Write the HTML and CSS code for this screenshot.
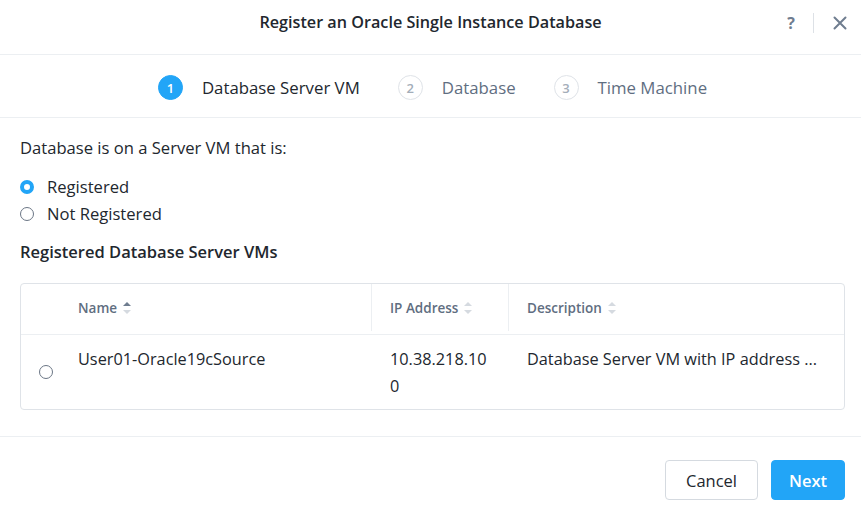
FILE: index.html
```html
<!DOCTYPE html>
<html>
<head>
<meta charset="utf-8">
<link rel="stylesheet" href="styles.css">
</head>
<body>
<div class="modal">
  <header class="hdr">
    <div class="title">Register an Oracle Single Instance Database</div>
    <div class="hdr-actions">
      <span class="help">?</span>
      <span class="sep"></span>
      <svg class="close" width="14" height="14" viewBox="0 0 14 14"><path d="M1.5 1.5 L12.5 12.5 M12.5 1.5 L1.5 12.5" stroke="#6f7d8f" stroke-width="2" stroke-linecap="round"/></svg>
    </div>
  </header>
  <nav class="steps">
    <div class="step active"><span class="num">1</span><span class="lbl">Database Server VM</span></div>
    <div class="step"><span class="num">2</span><span class="lbl">Database</span></div>
    <div class="step"><span class="num">3</span><span class="lbl">Time Machine</span></div>
  </nav>
  <main class="body">
    <p class="q">Database is on a Server VM that is:</p>
    <label class="radio"><span class="rb on"></span>Registered</label>
    <label class="radio"><span class="rb"></span>Not Registered</label>
    <h3 class="sub">Registered Database Server VMs</h3>
    <div class="table">
      <div class="tr th">
        <div class="c sel"></div>
        <div class="c name">Name <span class="sort up"></span></div>
        <div class="c ip">IP Address <span class="sort"></span></div>
        <div class="c desc">Description <span class="sort"></span></div>
      </div>
      <div class="tr td">
        <div class="c sel"><span class="rb"></span></div>
        <div class="c name">User01-Oracle19cSource</div>
        <div class="c ip">10.38.218.10<br>0</div>
        <div class="c desc">Database Server VM with IP address ...</div>
      </div>
    </div>
  </main>
  <footer class="ftr">
    <button class="btn cancel">Cancel</button>
    <button class="btn next">Next</button>
  </footer>
</div>
</body>
</html>
```
FILE: styles.css
```css
* { box-sizing: border-box; }
html, body { margin: 0; padding: 0; background: #fff; }
body { font-family: "Open Sans", "Noto Sans", sans-serif; color: #22272e; width: 861px; height: 514px; overflow: hidden; }
.modal { display: flex; flex-direction: column; height: 514px; }
.hdr { height: 55px; flex: none; border-bottom: 1px solid #eceff2; display: flex; align-items: flex-start; justify-content: center; position: relative; padding-top: 11px; }
.title { font-size: 16.2px; font-weight: 600; line-height: 22px; }
.hdr-actions { position: absolute; right: 14px; top: 12px; height: 22px; display: flex; align-items: center; }
.help { color: #6f7d8f; font-size: 16px; font-weight: 700; margin-right: 18px; }
.sep { width: 1px; height: 20px; background: #dde1e6; margin-right: 19px; }
.close { display: block; }
.steps { height: 63px; flex: none; border-bottom: 1px solid #eceff2; display: flex; justify-content: center; align-items: center; gap: 38px; padding-left: 4px; padding-top: 3px; }
.step { display: flex; align-items: center; color: #5f6e81; font-size: 16.8px; }
.step .lbl { line-height: 22px; }
.step .num { width: 25px; height: 25px; border-radius: 50%; border: 1px solid #dfe3e8; color: #a3adb9; display: flex; align-items: center; justify-content: center; font-size: 13px; margin-right: 19px; font-weight: 600; }
.step.active .num { background: #22a5f7; border-color: #22a5f7; color: #fff; }
.step.active { color: #22272e; }
.body { padding: 19px 16px 0 20px; flex: 1; }
.q { margin: 0 0 14px; font-size: 16.6px; line-height: 22px; }
.radio { display: flex; align-items: center; font-size: 16.6px; height: 27px; }
.rb { width: 14px; height: 14px; border-radius: 50%; border: 1px solid #6b7685; margin-right: 13px; display: inline-block; flex: none; }
.rb.on { border: 4px solid #22a5f7; }
.sub { font-size: 16.5px; font-weight: 600; margin: 13px 0 19px; line-height: 24px; }
.table { border: 1px solid #dfe3e8; border-radius: 4px; width: 825px; }
.tr { display: flex; }
.th { height: 51px; border-bottom: 1px solid #eceff2; color: #5f6e81; font-weight: 600; font-size: 13.5px; padding-bottom: 3px; }
.th .c { display: flex; align-items: center; }
.c.sel { width: 38px; display: flex; align-items: center; justify-content: center; padding-left: 12px; }
.c.name { width: 312px; padding-left: 19px; }
.c.ip { width: 137px; padding-left: 18px; border-left: 1px solid #eceff2; }
.c.desc { flex: 1; padding-left: 18px; border-left: 1px solid #eceff2; min-width: 0; white-space: nowrap; }
.td { height: 74px; font-size: 16.3px; line-height: 27px; }
.td .c { padding-top: 11px; }
.td .c.ip, .td .c.desc { border-left-color: transparent; }
.td .c.sel { padding-top: 0; padding-left: 12px; }
.td .c.sel .rb { margin: 0; border-color: #6b7685; }
.sort { display: inline-block; width: 8px; height: 12px; margin-left: 6px; position: relative; }
.sort::before, .sort::after { content: ""; position: absolute; left: 0; border-left: 4px solid transparent; border-right: 4px solid transparent; }
.sort::before { top: 0; border-bottom: 4px solid #d5dae0; }
.sort::after { bottom: 0; border-top: 4px solid #d5dae0; }
.sort.up::before { border-bottom-color: #6f7d8f; }
.ftr { height: 78px; flex: none; border-top: 1px solid #eceff2; display: flex; justify-content: flex-end; align-items: flex-start; gap: 13px; padding-right: 16px; padding-top: 23px; }
.btn { font-family: inherit; font-size: 16.5px; height: 40px; border-radius: 4px; cursor: pointer; }
.cancel { width: 93px; background: #fff; border: 1px solid #d5dae0; color: #22272e; }
.next { width: 74px; background: #22a5f7; border: 1px solid #22a5f7; color: #fff; font-weight: 600; }
```
